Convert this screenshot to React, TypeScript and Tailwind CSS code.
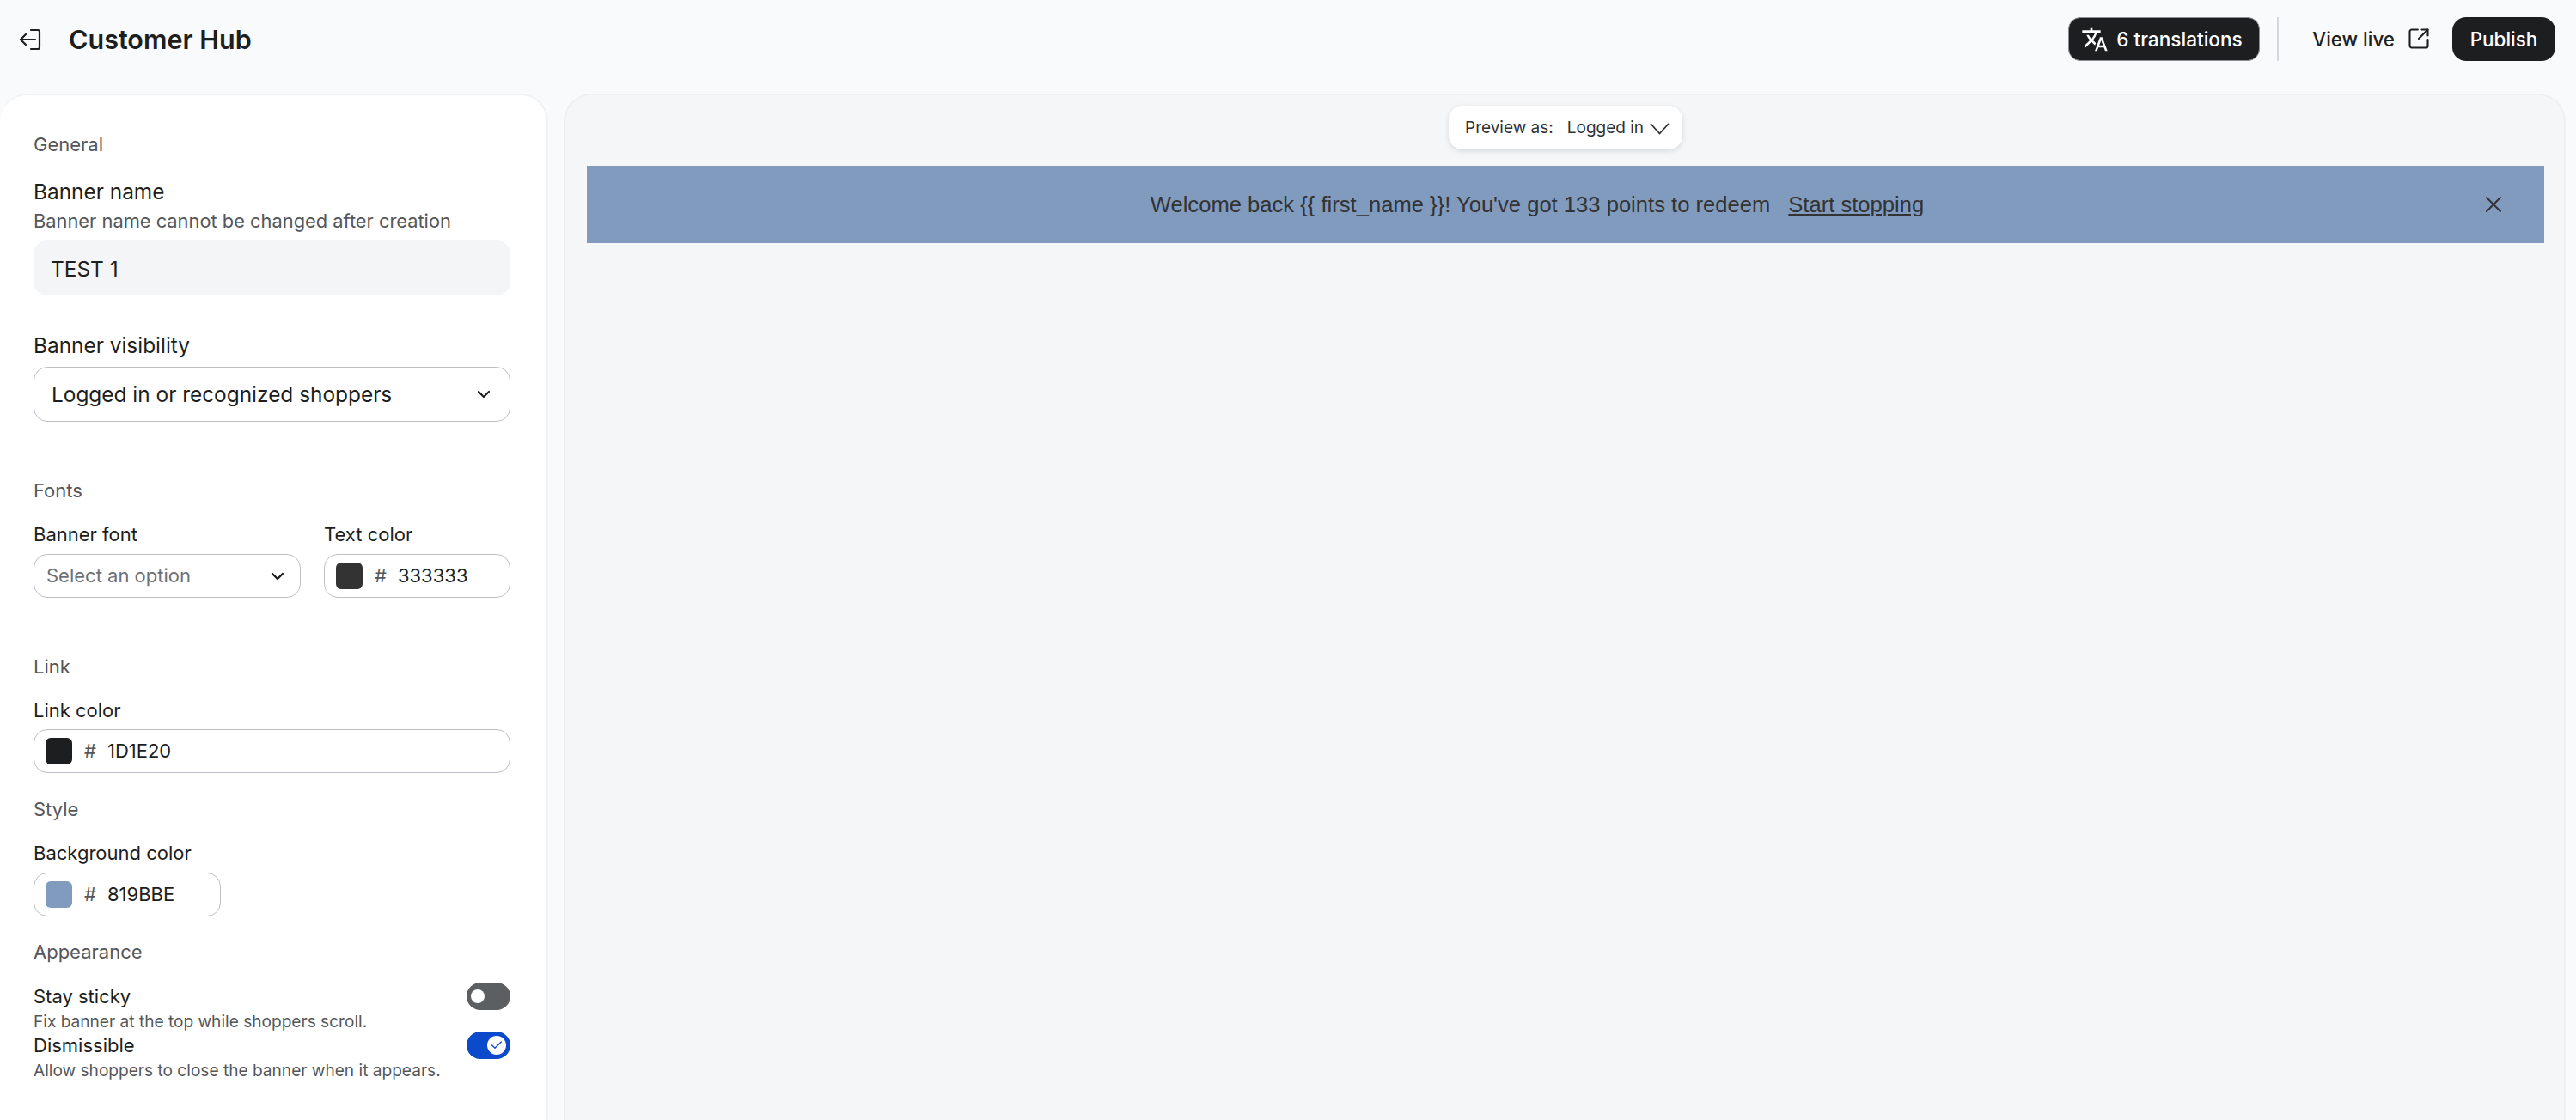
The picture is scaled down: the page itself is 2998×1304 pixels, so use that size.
import { ChevronDown, SquareArrowOutUpRight, X, Check } from 'lucide-react';
import { MdTranslate } from 'react-icons/md';

function SectionTitle({ children, className }: { children: string; className: string }) {
  return <p className={`text-[22px] leading-[32px] text-[#55575a] ${className}`}>{children}</p>;
}

function FieldLabel({ children }: { children: string }) {
  return <p className="text-[22px] leading-[32px] text-[#1d1e20]">{children}</p>;
}

function ColorField({ color, value, className }: { color: string; value: string; className: string }) {
  return (
    <div className={`flex h-[51px] items-center rounded-[16px] border border-[#bcbfc9] bg-white pl-[13px] ${className}`}>
      <span className="h-[31px] w-[31px] rounded-[6px]" style={{ backgroundColor: color }} />
      <span className="ml-[14px] text-[22px] text-[#55575a]">#</span>
      <span className="ml-[13px] text-[22px] text-[#1d1e20]">{value}</span>
    </div>
  );
}

function Toggle({ on }: { on: boolean }) {
  if (on) {
    return (
      <span className="flex h-[32px] w-[51px] items-center justify-end rounded-full bg-[#0b4acb] pr-[5px]">
        <span className="flex h-[22px] w-[22px] items-center justify-center rounded-full bg-white">
          <Check className="h-[16px] w-[16px] text-[#0b4acb]" strokeWidth={2} />
        </span>
      </span>
    );
  }
  return (
    <span className="flex h-[32px] w-[51px] items-center rounded-full bg-[#5c5f62] pl-[5px]">
      <span className="h-[16px] w-[16px] rounded-full bg-white" />
    </span>
  );
}

function ToggleRow({ title, hint, on }: { title: string; hint: string; on: boolean }) {
  return (
    <div className="flex items-start justify-between">
      <div>
        <p className="text-[22px] leading-[32px] text-[#1d1e20]">{title}</p>
        <p className="mt-[1px] text-[19.1px] leading-[24px] text-[#55575a]">{hint}</p>
      </div>
      <Toggle on={on} />
    </div>
  );
}

export default function App() {
  return (
    <div className="flex h-[1304px] flex-col overflow-hidden bg-[#f9fafc] font-['Inter',sans-serif] text-[#1d1e20]">
      {/* header */}
      <header className="flex h-[109px] shrink-0 items-start justify-between pt-[20px] pr-[24px] pl-[22px]">
        <div className="flex h-[51px] items-center">
          <svg className="h-[28px] w-[28px]" viewBox="0 0 28 28" fill="none" stroke="#1d1e20" strokeWidth="2.2" strokeLinecap="round" strokeLinejoin="round">
            <path d="M14 3h8a2 2 0 0 1 2 2v18a2 2 0 0 1-2 2h-8" />
            <path d="M19 14H2" />
            <path d="M8 8l-6 6 6 6" />
          </svg>
          <h1 className="ml-[30px] text-[30.5px] font-semibold text-[#1d1e20]">Customer Hub</h1>
        </div>
        <div className="flex items-center">
          <button className="flex h-[51px] w-[223px] items-center rounded-[14px] border border-[#8d8f92] bg-[#1d1e20] pl-[14px] text-[22.6px] font-medium text-white">
            <MdTranslate className="h-[32px] w-[32px]" />
            <span className="ml-[9px]">6 translations</span>
          </button>
          <span className="ml-[20px] h-[51px] w-[2px] bg-[#d5d7dc]" />
          <button className="ml-[39px] flex items-center text-[22.4px] font-medium text-[#1d1e20]">
            View live
            <SquareArrowOutUpRight className="ml-[14px] h-[28px] w-[28px]" strokeWidth={1.8} />
          </button>
          <button className="ml-[25px] h-[51px] w-[120px] rounded-[16px] bg-[#1d1e20] text-[22.4px] font-medium text-white">Publish</button>
        </div>
      </header>

      <main className="flex min-h-0 flex-1 pr-[12px]">
        {/* settings */}
        <aside className="w-[638px] shrink-0 rounded-t-[32px] border-t-2 border-r-2 border-[#f1f2f4] bg-white pt-[41px] pr-[42px] pl-[39px]">
          <SectionTitle className="">General</SectionTitle>
          <p className="mt-[23px] text-[24.4px] leading-[32px] text-[#1d1e20]">Banner name</p>
          <p className="mt-[2px] text-[21.85px] leading-[32px] text-[#55575a]">Banner name cannot be changed after creation</p>
          <div className="mt-[7px] flex h-[64px] items-center rounded-[16px] bg-[#f4f5f7] pt-[2px] pl-[20px] text-[24.4px]">TEST 1</div>

          <p className="mt-[42px] text-[24.4px] leading-[32px] text-[#1d1e20]">Banner visibility</p>
          <div className="mt-[9px] flex h-[64px] items-center justify-between rounded-[16px] border border-[#bcbfc9] bg-white pr-[18px] pl-[20px] text-[24.4px]">
            Logged in or recognized shoppers
            <ChevronDown className="h-[24px] w-[24px]" strokeWidth={2.2} />
          </div>

          <SectionTitle className="mt-[64px]">Fonts</SectionTitle>
          <div className="mt-[19px] flex gap-[27px]">
            <div className="w-[311px]">
              <FieldLabel>Banner font</FieldLabel>
              <div className="mt-[7px] flex h-[51px] items-center justify-between rounded-[16px] border border-[#bcbfc9] bg-white pr-[14px] pl-[14px] text-[22px] text-[#6d7175]">
                Select an option
                <ChevronDown className="h-[24px] w-[24px] text-[#1d1e20]" strokeWidth={2.4} />
              </div>
            </div>
            <div className="flex-1">
              <FieldLabel>Text color</FieldLabel>
              <ColorField color="#333333" value="333333" className="mt-[7px] w-full" />
            </div>
          </div>

          <SectionTitle className="mt-[64px]">Link</SectionTitle>
          <div className="mt-[19px]">
            <FieldLabel>Link color</FieldLabel>
            <ColorField color="#1d1e20" value="1D1E20" className="mt-[6px] w-full" />
          </div>

          <SectionTitle className="mt-[26px]">Style</SectionTitle>
          <div className="mt-[19px]">
            <FieldLabel>Background color</FieldLabel>
            <ColorField color="#819bbe" value="819BBE" className="mt-[7px] w-[218px]" />
          </div>

          <SectionTitle className="mt-[25px]">Appearance</SectionTitle>
          <div className="mt-[20px] flex flex-col">
            <ToggleRow title="Stay sticky" hint="Fix banner at the top while shoppers scroll." on={false} />
            <ToggleRow title="Dismissible" hint="Allow shoppers to close the banner when it appears." on />
          </div>
        </aside>

        {/* preview */}
        <section className="ml-[18px] min-w-0 flex-1 rounded-t-[32px] border-x-2 border-t-2 border-[#eef0f2] bg-[#f5f6f8] pt-[12px] pr-[23px] pl-[25px]">
          <div className="flex justify-center">
            <div className="flex h-[51px] w-[272px] items-center rounded-[16px] bg-white pt-[2px] pl-[19px] text-[19px] text-[#303133] shadow-[0_2px_6px_rgba(0,0,0,0.12)]">
              Preview as:
              <span className="ml-[16px]">Logged in</span>
              <svg className="ml-[7px] h-[14px] w-[23px]" viewBox="0 0 23 14" fill="none" stroke="#303133" strokeWidth="1.8" strokeLinecap="round" strokeLinejoin="round">
                <path d="M1.5 1.5L11.5 12.5L21.5 1.5" />
              </svg>
            </div>
          </div>
          <div className="relative mt-[19px] flex h-[90px] items-center justify-center bg-[#819bbe] pr-[66px] font-['Liberation_Sans',sans-serif] text-[25.6px] text-[#333333]">
            <span>Welcome back {'{{'} first_name {'}}'}! You've got 133 points to redeem</span>
            <a className="ml-[21px] underline">Start stopping</a>
            <X className="absolute top-[29px] right-[43px] h-[32px] w-[32px]" strokeWidth={1.5} />
          </div>
        </section>
      </main>
    </div>
  );
}
